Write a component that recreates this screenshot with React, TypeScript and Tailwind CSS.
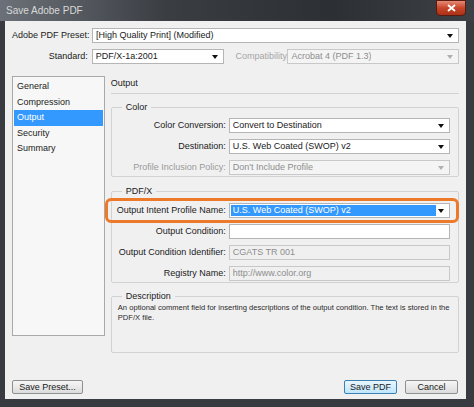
import React from 'react';

const font = { fontFamily: '"Liberation Sans", Arial, sans-serif' };

function Arrow({ gray = false }: { gray?: boolean }) {
  return (
    <svg width="6" height="4" viewBox="0 0 6 4" className="shrink-0">
      <path d="M0 0h6L3 4z" fill={gray ? '#b0b0b0' : '#111'} />
    </svg>
  );
}

function Select({ value, width, disabled = false }: { value: string; width: string; disabled?: boolean }) {
  return (
    <div
      className={`${width} h-[15px] flex items-center justify-between pl-[3px] pr-[5px] border ${
        disabled ? 'border-[#c8c8c8] bg-[#f4f4f4] text-[#8d8d8d]' : 'border-[#b5b5b5] bg-white text-[#1a1a1a]'
      }`}
    >
      <span className="truncate">{value}</span>
      <Arrow gray={disabled} />
    </div>
  );
}

function Field({ value = '', disabled = false }: { value?: string; disabled?: boolean }) {
  return (
    <div
      className={`w-[221px] h-[15px] flex items-center pl-[3px] border ${
        disabled ? 'border-[#c8c8c8] bg-[#f0f0f0] text-[#8d8d8d]' : 'border-[#b5b5b5] bg-white text-[#1a1a1a]'
      }`}
    >
      {value}
    </div>
  );
}

function Row({ label, gray = false, children }: { label: string; gray?: boolean; children: React.ReactNode }) {
  return (
    <div className="flex items-center">
      <div className={`w-[117px] pr-[3px] text-right whitespace-nowrap ${gray ? 'text-[#9a9a9a]' : 'text-[#1a1a1a]'}`}>
        {label}
      </div>
      {children}
    </div>
  );
}

function Group({ title, className, children }: { title: string; className: string; children: React.ReactNode }) {
  return (
    <div className={`relative border border-[#d2d2d2] rounded-[2px] ${className}`}>
      <span className="absolute -top-[7px] left-[10px] px-[4px] bg-[#f0f0f0] text-[#1a1a1a] leading-[12px]">{title}</span>
      {children}
    </div>
  );
}

export default function App() {
  const items = ['General', 'Compression', 'Output', 'Security', 'Summary'];
  return (
    <div className="w-[474px] h-[407px] bg-[#383c41] flex flex-col text-[9px] overflow-hidden" style={font}>
      {/* title bar */}
      <div className="h-[21px] flex items-start justify-between bg-[linear-gradient(90deg,#6c7179_0%,#3a3e43_35%,#2c3034_70%,#3d4146_100%)]">
        <span className="pl-[6px] pt-[5px] text-[10px] text-[#d8d8d8] leading-[12px]">Save Adobe PDF</span>
        <div className="mr-[8px] w-[30px] h-[16px] rounded-b-[4px] border border-[#5a1a10] bg-[linear-gradient(180deg,#e58a74_0%,#c8452a_50%,#a83216_100%)] flex items-center justify-center">
          <svg width="9" height="8" viewBox="0 0 9 8">
            <path d="M1 1l7 6M8 1L1 7" stroke="#fff" strokeWidth="1.8" />
          </svg>
        </div>
      </div>

      {/* body */}
      <div className="ml-[5px] mr-[8px] mb-[8px] flex-1 bg-[#f0f0f0] flex flex-col px-[7px]">
        <div className="mt-[7px] flex items-center">
          <div className="w-[80px] pr-[4px] text-right text-[#1a1a1a] whitespace-nowrap">Adobe PDF Preset:</div>
          <Select value="[High Quality Print] (Modified)" width="w-[368px]" />
        </div>
        <div className="mt-[6px] flex items-center">
          <div className="w-[80px] pr-[4px] text-right text-[#1a1a1a]">Standard:</div>
          <Select value="PDF/X-1a:2001" width="w-[133px]" />
          <div className="ml-[11px] w-[52px] text-[#a5a5a5]">Compatibility:</div>
          <Select value="Acrobat 4 (PDF 1.3)" width="w-[172px]" disabled />
        </div>

        <div className="mt-[12px] flex">
          <div className="w-[93px] h-[260px] border border-[#a9a9a9] bg-[#f7f7f7] pt-[2px] px-[1px] flex flex-col">
            {items.map((it) => (
              <div
                key={it}
                className={`h-[15.5px] pl-[3px] flex items-center ${
                  it === 'Output' ? 'bg-[#3399ff] text-white' : 'text-[#1a1a1a]'
                }`}
              >
                {it}
              </div>
            ))}
          </div>

          <div className="ml-[6px] w-[349px] flex flex-col">
            <div className="pt-[1px] text-[#1a1a1a] leading-[12px]">Output</div>
            <div className="mt-[4px] h-px bg-[#d2d2d2]" />

            <Group title="Color" className="mt-[13px] h-[70px] pt-[10px] flex flex-col gap-[6px]">
              <Row label="Color Conversion:">
                <Select value="Convert to Destination" width="w-[221px]" />
              </Row>
              <Row label="Destination:">
                <Select value="U.S. Web Coated (SWOP) v2" width="w-[221px]" />
              </Row>
              <Row label="Profile Inclusion Policy:" gray>
                <Select value="Don't Include Profile" width="w-[221px]" disabled />
              </Row>
            </Group>

            <Group title="PDF/X" className="mt-[14px] h-[92px] pt-[11px] flex flex-col gap-[6px]">
              <div className="relative">
                <div className="absolute -left-[7px] -right-[1px] -top-[5px] -bottom-[5px] border-[3px] border-[#ec7a2a] rounded-[6px]" />
                <Row label="Output Intent Profile Name:">
                  <div className="w-[221px] h-[15px] flex items-center justify-between pl-[1px] pr-[5px] border border-[#b5b5b5] bg-white">
                    <span className="w-[205px] h-[11px] bg-[#3399ff] text-white pl-[2px] leading-[11px]">U.S. Web Coated (SWOP) v2</span>
                    <Arrow />
                  </div>
                </Row>
              </div>
              <Row label="Output Condition:">
                <Field />
              </Row>
              <Row label="Output Condition Identifier:">
                <Field value="CGATS TR 001" disabled />
              </Row>
              <Row label="Registry Name:">
                <Field value="http://www.color.org" disabled />
              </Row>
            </Group>

            <Group title="Description" className="mt-[13px] h-[57px] pt-[6px] px-[6px]">
              <p className="text-[7.6px] leading-[10px] text-[#2a2a2a] whitespace-nowrap">
                An optional comment field for inserting descriptions of the output condition. The text is stored in the
                <br />
                PDF/X file.
              </p>
            </Group>
          </div>
        </div>

        <div className="mt-[auto] mb-[5px] flex items-center">
          <button className="w-[71px] h-[14px] border border-[#8e8f8f] rounded-[2px] bg-[linear-gradient(180deg,#f6f6f6,#dcdcdc)] text-[#1a1a1a] leading-[12px]">
            Save Preset...
          </button>
          <button className="ml-auto w-[53px] h-[14px] border border-[#3c7fb1] rounded-[2px] bg-[linear-gradient(180deg,#eaf6fd,#bee6fd)] text-[#1a1a1a] leading-[12px]">
            Save PDF
          </button>
          <button className="ml-[8px] mr-[1px] w-[53px] h-[14px] border border-[#8e8f8f] rounded-[2px] bg-[linear-gradient(180deg,#f6f6f6,#dcdcdc)] text-[#1a1a1a] leading-[12px]">
            Cancel
          </button>
        </div>
      </div>
    </div>
  );
}
